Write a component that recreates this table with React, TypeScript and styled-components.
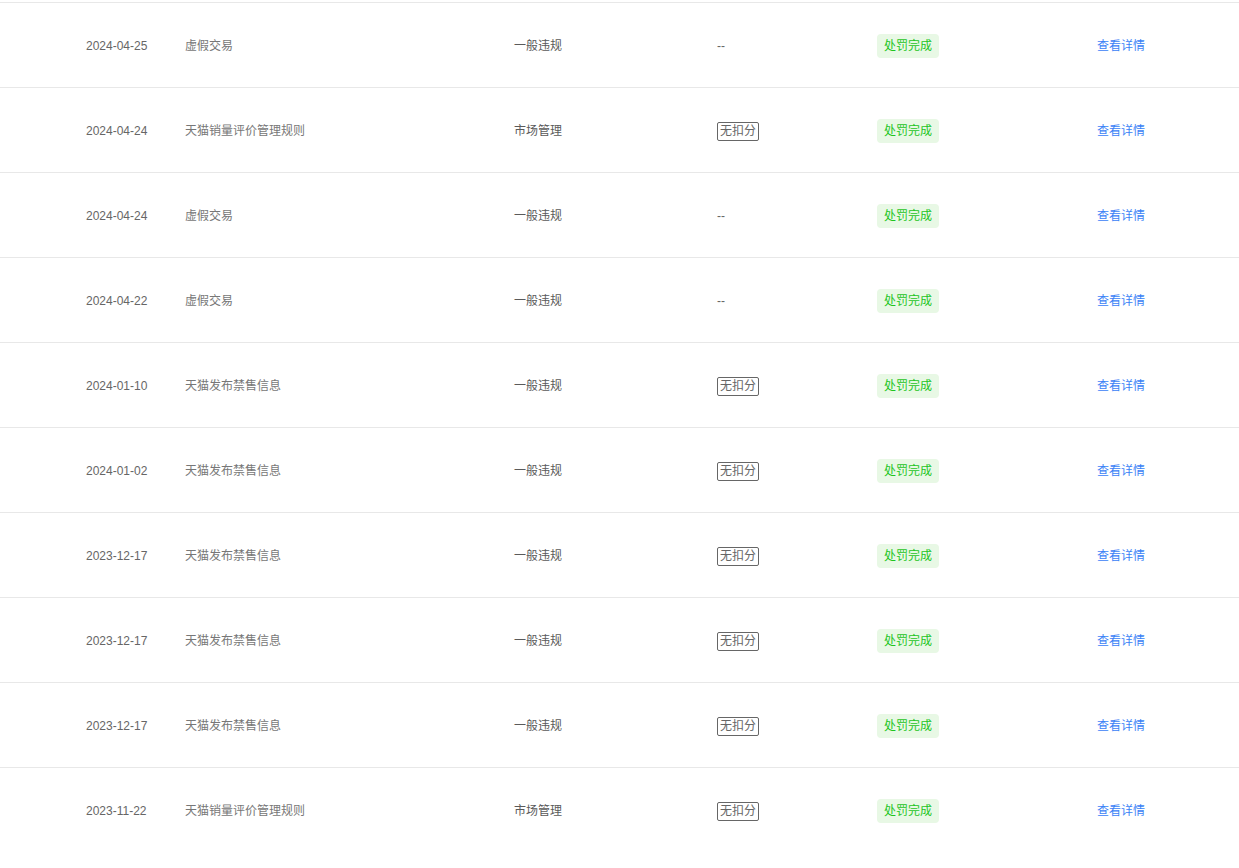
import React from 'react';
import styled, {createGlobalStyle} from 'styled-components';

const GlobalStyle = createGlobalStyle`
  html, body {
    margin: 0;
    padding: 0;
    background: #fff;
  }

  body {
    font-family: "Liberation Sans", "Noto Sans CJK SC", sans-serif;
  }
`

type Record = {
    date: string
    rule: string
    kind: string
    score: boolean
}

const records: Record[] = [
    {date: '2024-04-25', rule: '虚假交易', kind: '一般违规', score: false},
    {date: '2024-04-24', rule: '天猫销量评价管理规则', kind: '市场管理', score: true},
    {date: '2024-04-24', rule: '虚假交易', kind: '一般违规', score: false},
    {date: '2024-04-22', rule: '虚假交易', kind: '一般违规', score: false},
    {date: '2024-01-10', rule: '天猫发布禁售信息', kind: '一般违规', score: true},
    {date: '2024-01-02', rule: '天猫发布禁售信息', kind: '一般违规', score: true},
    {date: '2023-12-17', rule: '天猫发布禁售信息', kind: '一般违规', score: true},
    {date: '2023-12-17', rule: '天猫发布禁售信息', kind: '一般违规', score: true},
    {date: '2023-12-17', rule: '天猫发布禁售信息', kind: '一般违规', score: true},
    {date: '2023-11-22', rule: '天猫销量评价管理规则', kind: '市场管理', score: true},
]

export default function App() {
    return (
        <>
            <GlobalStyle/>
            <StyledTable>
                {records.map((r, index) => (
                    <Row key={index}>
                        <Cell>{r.date}</Cell>
                        <Cell $light>{r.rule}</Cell>
                        <Cell $dark>{r.kind}</Cell>
                        <Cell>{r.score ? <ScoreTag>无扣分</ScoreTag> : '--'}</Cell>
                        <Cell><StatusBadge>处罚完成</StatusBadge></Cell>
                        <Cell><DetailLink href="#">查看详情</DetailLink></Cell>
                    </Row>
                ))}
            </StyledTable>
        </>
    );
}

const StyledTable = styled.div`
  padding-top: 2px;
  width: 1239px;
`

const Row = styled.div`
  display: grid;
  grid-template-columns: 99px 329px 203px 160px 220px 1fr;
  align-items: center;
  height: 85px;
  padding-left: 86px;
  padding-top: 2px;
  box-sizing: border-box;
  border-top: 1px solid #e8e8e8;
`

const Cell = styled.div<{ $dark?: boolean, $light?: boolean }>`
  font-size: 12px;
  line-height: 18px;
  font-weight: 400;
  color: ${props => props.$dark ? '#5a5a5a' : props.$light ? '#777' : '#666'};
  white-space: nowrap;
  display: flex;
  align-items: center;
`

const ScoreTag = styled.span`
  display: inline-block;
  padding: 0 2px;
  border: 1px solid #666;
  border-radius: 2px;
  color: #666;
  font-size: 12px;
  line-height: 17px;
`

const StatusBadge = styled.span`
  display: inline-block;
  padding: 0 7px;
  height: 24px;
  line-height: 24px;
  border-radius: 4px;
  background: #e8f8e5;
  color: #1ec51e;
  font-weight: 400;
  font-size: 12px;
`

const DetailLink = styled.a`
  color: #3b82f6;
  text-decoration: none;
  font-size: 12px;
`
